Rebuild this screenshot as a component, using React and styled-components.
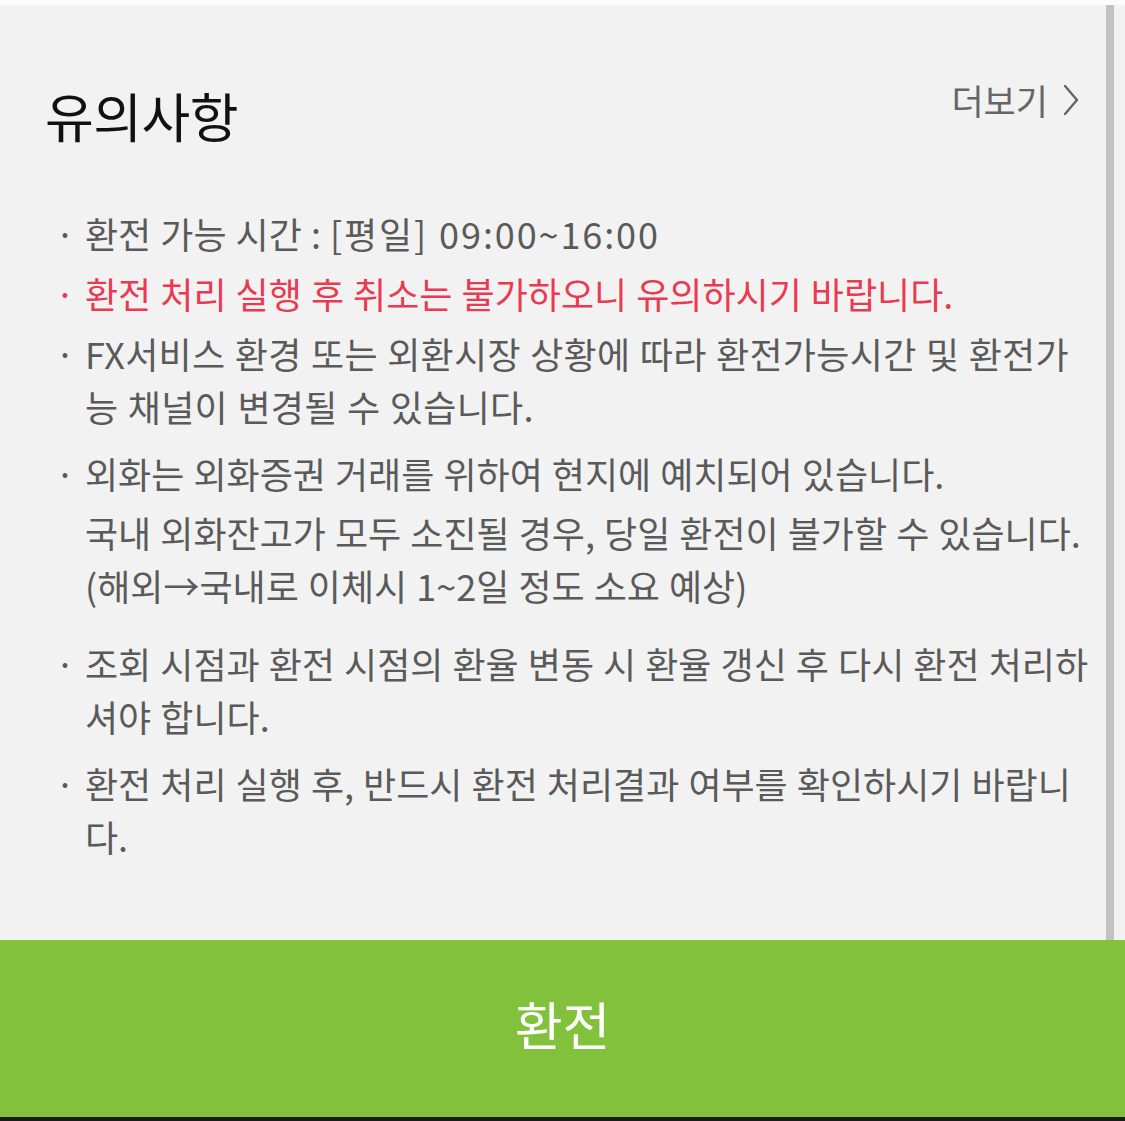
import React from 'react';
import styled, { createGlobalStyle } from 'styled-components';

const GlobalStyle = createGlobalStyle`
  html, body {
    margin: 0;
    padding: 0;
    background: #f2f2f2;
  }
  body {
    font-family: "Noto Sans CJK KR", "Noto Sans", sans-serif;
  }
`;

const Screen = styled.div`
  width: 1125px;
  height: 1121px;
  display: flex;
  flex-direction: column;
  background: #f2f2f2;
  border-top: 5px solid #fbfbfb;
  box-sizing: border-box;
  position: relative;
  overflow: hidden;
`;

const Body = styled.div`
  flex: 1;
  padding: 70px 35px 0 45px;
  position: relative;
`;

const Scrollbar = styled.div`
  position: absolute;
  top: -5px;
  right: 11px;
  width: 8px;
  bottom: 0;
  background: #c2c2c2;
`;

const Header = styled.div`
  display: flex;
  justify-content: space-between;
  align-items: flex-start;
`;

const Title = styled.h2`
  margin: 0;
  margin-top: 10px;
  font-size: 53px;
  line-height: 60px;
  font-weight: 400;
  color: #111;
  letter-spacing: -0.5px;
`;

const More = styled.button`
  display: flex;
  align-items: center;
  gap: 14px;
  border: none;
  background: none;
  padding: 0;
  margin-right: 10px;
  font-family: inherit;
  font-size: 35px;
  font-weight: 400;
  line-height: 50px;
  color: #666;
`;

const List = styled.ul`
  list-style: none;
  margin: 62px 0 0;
  padding: 0 0 0 10px;
`;

const Item = styled.li`
  display: grid;
  grid-template-columns: 30px 1fr;
  margin-top: ${(p) => p.$space || 0}px;
  font-size: 36px;
  font-weight: 400;
  line-height: 53px;
  letter-spacing: ${(p) => p.$track || 0}px;
  word-spacing: 1px;
  color: ${(p) => (p.$warn ? '#ea3a52' : '#5a5a5a')};
`;

const Bullet = styled.span`
  color: inherit;
`;

const Note = styled.div`
  margin-top: 6px;
`;

/* the opening hours are set with wider tracking than the body copy */
const Hours = styled.span`
  letter-spacing: 1.9px;
`;

const Footer = styled.button`
  height: 181px;
  flex-shrink: 0;
  border: none;
  border-bottom: 4px solid #1a1a1a;
  background: #82c13c;
  color: #fff;
  font-family: inherit;
  font-size: 52px;
  font-weight: 400;
  padding: 0 0 10px;
`;

const Chevron = () => (
  <svg width="18" height="34" viewBox="0 0 18 34" fill="none">
    <path d="M3 3l12 14L3 31" stroke="#666" strokeWidth="2.4" strokeLinecap="round" strokeLinejoin="round" />
  </svg>
);

const notices = [
  { text: <>환전 가능 시간 : <Hours>[평일] 09:00~16:00</Hours></>, space: 0 },
  { text: '환전 처리 실행 후 취소는 불가하오니 유의하시기 바랍니다.', space: 7, warn: true },
  {
    text: 'FX서비스 환경 또는 외환시장 상황에 따라 환전가능시간 및 환전가능 채널이 변경될 수 있습니다.',
    space: 7,
    track: 0.3,
  },
  {
    text: '외화는 외화증권 거래를 위하여 현지에 예치되어 있습니다.',
    note: ['국내 외화잔고가 모두 소진될 경우, 당일 환전이 불가할 수 있습니다.', '(해외→국내로 이체시 1~2일 정도 소요 예상)'],
    space: 14,
  },
  { text: '조회 시점과 환전 시점의 환율 변동 시 환율 갱신 후 다시 환전 처리하셔야 합니다.', space: 25 },
  { text: '환전 처리 실행 후, 반드시 환전 처리결과 여부를 확인하시기 바랍니다.', space: 14 },
];

const App = () => {
  return (
    <>
      <GlobalStyle />
      <Screen>
        <Body>
          <Header>
            <Title>유의사항</Title>
            <More>
              더보기
              <Chevron />
            </More>
          </Header>
          <List>
            {notices.map((n, i) => (
              <Item key={i} $space={n.space} $warn={n.warn} $track={n.track}>
                <Bullet>·</Bullet>
                <div>
                  {n.text}
                  {n.note && (
                    <Note>
                      {n.note.map((line) => (
                        <div key={line}>{line}</div>
                      ))}
                    </Note>
                  )}
                </div>
              </Item>
            ))}
          </List>
          <Scrollbar />
        </Body>
        <Footer>환전</Footer>
      </Screen>
    </>
  );
};

export default App;
